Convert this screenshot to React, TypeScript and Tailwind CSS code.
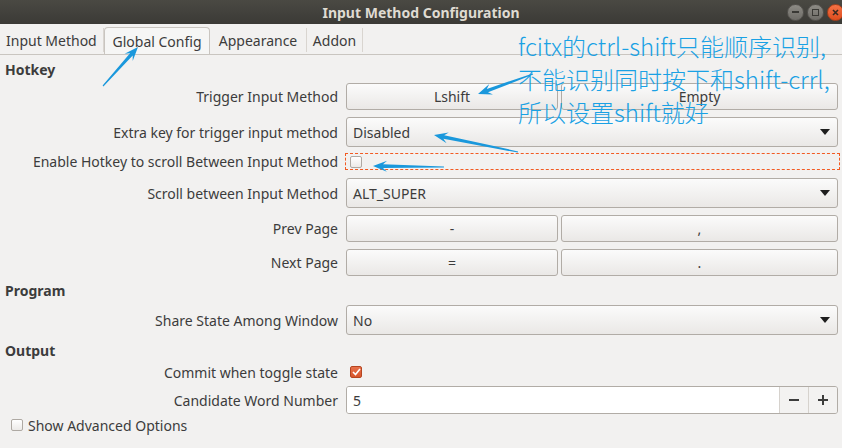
import React from 'react';

type Pt = [number, number];

// tapered annotation arrow: thin at the tail, barbed head at the tip
function arrowPoints(tail: Pt, tip: Pt) {
  const dx = tip[0] - tail[0];
  const dy = tip[1] - tail[1];
  const len = Math.hypot(dx, dy);
  const ux = dx / len;
  const uy = dy / len;
  const nx = -uy;
  const ny = ux;
  const L = 14;
  const W = 11;
  const bx = tip[0] - ux * L;
  const by = tip[1] - uy * L;
  const p = (x: number, y: number, k: number) =>
    `${(x + nx * k).toFixed(1)},${(y + ny * k).toFixed(1)}`;
  return [
    p(tail[0], tail[1], 0.6),
    p(bx + ux * 4, by + uy * 4, 1.8),
    p(bx, by, W / 2),
    p(tip[0], tip[1], 0),
    p(bx, by, -W / 2),
    p(bx + ux * 4, by + uy * 4, -1.8),
    p(tail[0], tail[1], -0.6),
  ].join(' ');
}

const arrows: [Pt, Pt][] = [
  [[103, 86], [138, 47]],
  [[533, 74], [478, 94]],
  [[518, 152], [434, 135]],
  [[444, 167], [373, 166]],
];

const btn =
  'h-full rounded-[3px] border border-[#b1aca6] bg-linear-to-b from-[#fbfbfb] to-[#eae8e6] flex items-center justify-center';

const Combo = ({ value }: { value: string }) => (
  <div className="h-full rounded-[3px] border border-[#b1aca6] bg-linear-to-b from-[#fbfbfb] to-[#eae8e6] flex items-center justify-between pl-[6px] pr-[7px]">
    <span>{value}</span>
    <svg width="10" height="6" viewBox="0 0 10 6">
      <path d="M0 0 L10 0 L5 6 Z" fill="#1e1e1e" />
    </svg>
  </div>
);

const Row = ({
  label,
  h,
  className = '',
  children,
}: {
  label: string;
  h: string;
  className?: string;
  children: React.ReactNode;
}) => (
  <div className={`flex items-center ${h} ${className}`}>
    <div className="w-[338px] shrink-0 text-right">{label}</div>
    <div className="ml-[8px] w-[492px] h-full">{children}</div>
  </div>
);

const Check = ({ checked = false }: { checked?: boolean }) =>
  checked ? (
    <div className="w-[12px] h-[12px] rounded-[2px] border border-[#b54520] bg-linear-to-b from-[#e8714a] to-[#d8552b] flex items-center justify-center">
      <svg width="9" height="8" viewBox="0 0 9 8">
        <path d="M1 4 L3.5 6.5 L8 1" stroke="white" strokeWidth="1.6" fill="none" />
      </svg>
    </div>
  ) : (
    <div className="w-[12px] h-[12px] rounded-[2px] border border-[#aea9a3] bg-linear-to-b from-white to-[#eceae8]" />
  );

export default function App() {
  return (
    <div className="relative w-[842px] h-[448px] overflow-hidden bg-[#f2f1f0] text-[14px] text-[#3c3c3c] font-['Noto_Sans',sans-serif]">
      {/* title bar */}
      <div className="grid grid-cols-[1fr_auto_1fr] items-center h-[24px] bg-linear-to-b from-[#4a4943] to-[#3b3a36]">
        <div />
        <div className="font-bold text-[#dfdbd2] text-[14px]">Input Method Configuration</div>
        <div className="flex justify-end items-center gap-[3px] -mr-[2px]">
          <div className="w-[17px] h-[17px] rounded-full bg-linear-to-b from-[#8d8b85] to-[#6e6c67] border border-[#55534f] flex items-center justify-center">
            <div className="w-[7px] h-[2px] bg-[#3a3935]" />
          </div>
          <div className="w-[17px] h-[17px] rounded-full bg-linear-to-b from-[#8d8b85] to-[#6e6c67] border border-[#55534f] flex items-center justify-center">
            <div className="w-[7px] h-[7px] border-[1.5px] border-[#3a3935]" />
          </div>
          <div className="w-[17px] h-[17px] rounded-full bg-linear-to-b from-[#f47245] to-[#df4c1c] border border-[#a8401c] flex items-center justify-center">
            <svg width="7" height="7" viewBox="0 0 7 7">
              <path d="M1 1 L6 6 M6 1 L1 6" stroke="#3a2a22" strokeWidth="1.6" />
            </svg>
          </div>
        </div>
      </div>

      {/* tabs */}
      <div className="flex items-end h-[31px] border-b border-[#c9c5c0]">
        <div className="w-[104px] h-[24px] mb-[2px] flex items-center pl-[6px] border-r border-[#d9d5d0]">Input Method</div>
        <div className="w-[106px] h-[27px] flex items-center justify-center rounded-t-[4px] border border-b-0 border-[#c9c5c0] bg-[#f6f6f5]">Global Config</div>
        <div className="w-[97px] h-[24px] mb-[2px] flex items-center justify-center border-r border-[#d9d5d0]">Appearance</div>
        <div className="w-[56px] h-[24px] mb-[2px] flex items-center justify-center border-r border-[#d9d5d0]">Addon</div>
      </div>

      {/* form */}
      <div className="flex flex-col">
        <div className="h-[28px] flex items-center pl-[5px] font-bold">Hotkey</div>
        <Row label="Trigger Input Method" h="h-[27px]">
          <div className="flex h-full gap-[3px]">
            <div className={`${btn} w-[212px]`}>Lshift</div>
            <div className={`${btn} flex-1`}>Empty</div>
          </div>
        </Row>
        <Row label="Extra key for trigger input method" h="h-[30px]" className="mt-[7px]">
          <Combo value="Disabled" />
        </Row>
        <Row label="Enable Hotkey to scroll Between Input Method" h="h-[17px]" className="mt-[6px]">
          <div className="h-full -ml-[1px] w-[495px] outline-1 outline-dashed outline-[#f25a22] -outline-offset-1 flex items-center pl-[5px]">
            <Check />
          </div>
        </Row>
        <Row label="Scroll between Input Method" h="h-[30px]" className="mt-[8px]">
          <Combo value="ALT_SUPER" />
        </Row>
        <Row label="Prev Page" h="h-[27px]" className="mt-[7px]">
          <div className="flex h-full gap-[3px]">
            <div className={`${btn} w-[212px]`}>-</div>
            <div className={`${btn} flex-1`}>,</div>
          </div>
        </Row>
        <Row label="Next Page" h="h-[27px]" className="mt-[7px]">
          <div className="flex h-full gap-[3px]">
            <div className={`${btn} w-[212px]`}>=</div>
            <div className={`${btn} flex-1`}>.</div>
          </div>
        </Row>
        <div className="h-[29px] flex items-center pl-[5px] font-bold">Program</div>
        <Row label="Share State Among Window" h="h-[30px]">
          <Combo value="No" />
        </Row>
        <div className="h-[30px] flex items-center pl-[5px] font-bold">Output</div>
        <Row label="Commit when toggle state" h="h-[14px]">
          <div className="h-full flex items-center pl-[4px]">
            <Check checked />
          </div>
        </Row>
        <Row label="Candidate Word Number" h="h-[28px]" className="mt-[7px]">
          <div className="h-full flex rounded-[3px] border border-[#b1aca6] overflow-hidden">
            <div className="flex-1 bg-white flex items-center pl-[6px]">5</div>
            <div className="w-[29px] border-l border-[#d6d2cd] bg-[#f3f2f1] flex items-center justify-center">
              <svg width="10" height="10" viewBox="0 0 10 10">
                <path d="M0 5 H10" stroke="#3c3c3c" strokeWidth="2" />
              </svg>
            </div>
            <div className="w-[29px] border-l border-[#d6d2cd] bg-[#f3f2f1] flex items-center justify-center">
              <svg width="10" height="10" viewBox="0 0 10 10">
                <path d="M0 5 H10 M5 0 V10" stroke="#3c3c3c" strokeWidth="2" />
              </svg>
            </div>
          </div>
        </Row>
        <div className="h-[22px] flex items-center pl-[11px] gap-[5px]">
          <Check />
          <span>Show Advanced Options</span>
        </div>
      </div>

      {/* annotation overlay */}
      <div className="absolute left-[518px] top-[29px] text-[24px] leading-[33px] font-light text-[#1aa1e4] font-['Noto_Sans_CJK_SC',sans-serif] whitespace-nowrap">
        <div>fcitx的ctrl-shift只能顺序识别,</div>
        <div>不能识别同时按下和shift-crrl,</div>
        <div>所以设置shift就好</div>
      </div>
      <svg className="absolute inset-0 pointer-events-none" width="842" height="448">
        {arrows.map(([a, b], i) => (
          <polygon key={i} points={arrowPoints(a, b)} fill="#1a98dc" />
        ))}
      </svg>
    </div>
  );
}
